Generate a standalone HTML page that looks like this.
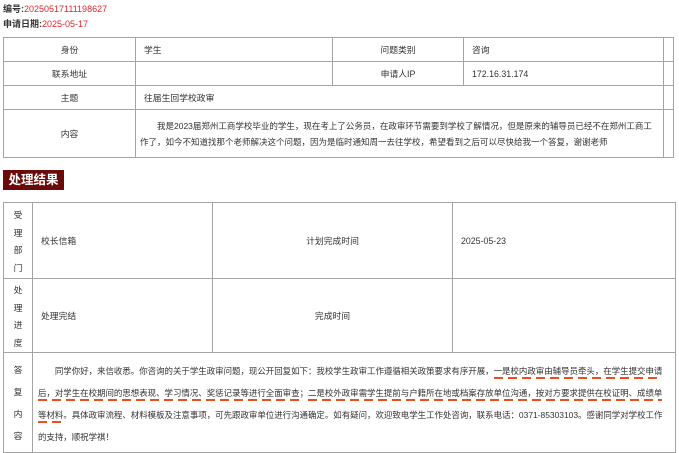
<!DOCTYPE html>
<html><head><meta charset="utf-8"><style>
*{margin:0;padding:0;box-sizing:border-box}
body{width:679px;height:430px;overflow:hidden;background:#fff;font-family:"Liberation Sans","Noto Sans CJK SC",sans-serif;color:#333;font-size:9px;position:relative}
.hd{position:absolute;left:3px;font-weight:bold;color:#333;font-size:9px}
.hd span{color:#e0252b;font-weight:normal}
table{position:absolute;border-collapse:collapse;table-layout:fixed}
td{border:1px solid #a5a5a5;padding:0 8px;vertical-align:middle;white-space:nowrap;font-size:8.8px}
td.c{text-align:center}
.btn{position:absolute;left:3px;top:170px;width:61px;height:20px;background:#6b0a0a;color:#fff;font-weight:bold;font-size:12.5px;line-height:20px;text-align:center}
.v{text-align:center;padding:0;line-height:17.5px}
.u{background:repeating-linear-gradient(90deg,#e8501e 0 9px,transparent 9px 14px) left bottom/100% 2px no-repeat;padding-bottom:3px}
.rp{line-height:22px;font-size:8.45px;padding:6px 5px 4px}
</style></head><body>
<div class="hd" style="top:2px">编号:<span>20250517111198627</span></div>
<div class="hd" style="top:17px">申请日期:<span>2025-05-17</span></div>
<table style="left:3px;top:37px;width:670px">
<colgroup><col style="width:132px"><col style="width:197px"><col style="width:131px"><col style="width:200px"><col style="width:10px"></colgroup>
<tr style="height:24px"><td class="c">身份</td><td>学生</td><td class="c">问题类别</td><td>咨询</td><td></td></tr>
<tr style="height:24px"><td class="c">联系地址</td><td></td><td class="c">申请人IP</td><td>172.16.31.174</td><td></td></tr>
<tr style="height:24px"><td class="c">主题</td><td colspan="3">往届生回学校政审</td><td></td></tr>
<tr style="height:48px"><td class="c">内容</td><td colspan="3" style="line-height:16px;padding:0 4px;font-size:8.5px">&emsp;&emsp;我是2023届郑州工商学校毕业的学生，现在考上了公务员，在政审环节需要到学校了解情况，但是原来的辅导员已经不在郑州工商工<br>作了，如今不知道找那个老师解决这个问题，因为是临时通知周一去往学校，希望看到之后可以尽快给我一个答复，谢谢老师</td><td></td></tr>
</table>
<div class="btn">处理结果</div>
<table style="left:3px;top:202px;width:672px">
<colgroup><col style="width:29px"><col style="width:180px"><col style="width:240px"><col style="width:223px"></colgroup>
<tr style="height:76px"><td class="v" style="padding-top:3px">受<br>理<br>部<br>门</td><td>校长信箱</td><td class="c">计划完成时间</td><td>2025-05-23</td></tr>
<tr style="height:69px"><td class="v" style="padding-top:3px">处<br>理<br>进<br>度</td><td>处理完结</td><td class="c">完成时间</td><td></td></tr>
<tr style="height:100px"><td class="v" style="line-height:22px;vertical-align:top;padding-top:6px">答<br>复<br>内<br>容</td><td colspan="3" class="rp">&emsp;&emsp;同学你好，来信收悉。你咨询的关于学生政审问题，现公开回复如下：我校学生政审工作遵循相关政策要求有序开展，<span class="u">一是校内政审由辅导员牵头，在学生提交申请</span><br><span class="u">后，对学生在校期间的思想表现、学习情况、奖惩记录等进行全面审查</span>；<span class="u">二是校外政审需学生提前与户籍所在地或档案存放单位沟通，按对方要求提供在校证明、成绩单</span><br><span class="u">等材料</span>。具体政审流程、材料模板及注意事项，可先跟政审单位进行沟通确定。如有疑问，欢迎致电学生工作处咨询，联系电话：0371-85303103。感谢同学对学校工作<br>的支持，顺祝学祺！</td></tr>
</table>
</body></html>
